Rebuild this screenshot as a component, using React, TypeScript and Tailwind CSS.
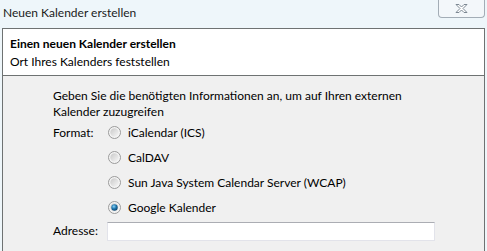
import React from 'react'

const font = { fontFamily: '"Segoe UI", Lato, "Noto Sans", sans-serif' }

function Radio({ checked }: { checked?: boolean }) {
  return (
    <svg width="13" height="13" viewBox="0 0 13 13" className="shrink-0">
      <defs>
        <linearGradient id="rg" x1="0" y1="0" x2="1" y2="1">
          <stop offset="0" stopColor="#c9c9c9" />
          <stop offset="1" stopColor="#f7f7f7" />
        </linearGradient>
        <radialGradient id="dot" cx="0.4" cy="0.35" r="0.7">
          <stop offset="0" stopColor="#8fd3f5" />
          <stop offset="0.5" stopColor="#1f78b0" />
          <stop offset="1" stopColor="#0d3f66" />
        </radialGradient>
      </defs>
      <circle cx="6.5" cy="6.5" r="6" fill="#f4f4f4" stroke="#9a9a9a" strokeWidth="1" />
      <circle cx="6.5" cy="6.5" r="4.2" fill="url(#rg)" />
      {checked && <circle cx="6.5" cy="6.5" r="3.2" fill="url(#dot)" />}
    </svg>
  )
}

function Option({ label, checked }: { label: string; checked?: boolean }) {
  return (
    <div className="flex h-[25px] items-center gap-[7px] pl-[1px]">
      <Radio checked={checked} />
      <span>{label}</span>
    </div>
  )
}

export default function App() {
  return (
    <div
      className="flex h-[251px] w-[487px] flex-col overflow-hidden bg-[#eef6fa] text-[12px] text-[#000]"
      style={font}
    >
      <div className="flex h-[28px] shrink-0 items-start justify-between">
        <span className="pl-[3px] pt-[5px] leading-[16px] text-[#1b1b1b]">Neuen Kalender erstellen</span>
        <div className="mr-[2px] flex h-[18px] w-[47px] items-center justify-center rounded-b-[4px] border border-t-0 border-[#a3adb6] bg-[#f3f7fa]">
          <svg width="13" height="9" viewBox="0 0 13 9">
            <path
              d="M1 0.5 H4 L6.5 3 L9 0.5 H12 L8 4.5 L12 8.5 H9 L6.5 6 L4 8.5 H1 L5 4.5 Z"
              fill="#ffffff"
              stroke="#7d8893"
              strokeWidth="1"
              strokeLinejoin="round"
            />
          </svg>
        </div>
      </div>
      <div className="ml-[2px] mr-[2px] flex flex-1 flex-col border border-b-0 border-[#6e7272] bg-[#f0f0f0]">
        <div className="h-[47px] shrink-0 border-b border-[#6e7272] bg-white pl-[7px] pt-[6px] leading-[18px]">
          <div className="font-bold">Einen neuen Kalender erstellen</div>
          <div>Ort Ihres Kalenders feststellen</div>
        </div>
        <div className="pl-[50px] pt-[12px] leading-[16px]">
          <p className="whitespace-nowrap">
            Geben Sie die benötigten Informationen an, um auf Ihren externen
            <br />
            Kalender zuzugreifen
          </p>
          <div className="grid grid-cols-[54px_1fr]">
            <div className="flex h-[25px] items-center">Format:</div>
            <div className="flex flex-col">
              <Option label="iCalendar (ICS)" />
              <Option label="CalDAV" />
              <Option label="Sun Java System Calendar Server (WCAP)" />
              <Option label="Google Kalender" checked />
            </div>
            <div className="flex h-[22px] items-center">Adresse:</div>
            <div className="flex h-[22px] items-center">
              <input
                className="h-[19px] w-[328px] border border-[#e2e3ea] border-t-[#abadb3] bg-white outline-none"
                style={font}
              />
            </div>
          </div>
        </div>
      </div>
    </div>
  )
}
